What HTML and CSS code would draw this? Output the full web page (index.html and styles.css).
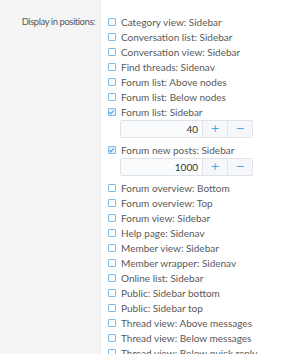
FILE: index.html
```html
<!DOCTYPE html>
<html>
	<head>
		<meta charset="UTF-8">
		<title>Display in positions</title>
		<link rel="stylesheet" href="styles.css">
	</head>
	<body>
		<div class="formrow">
			<div class="label">Display in positions:</div>
			<div class="field">
				<ul class="choices">
					<li><span class="box"></span>Category view: Sidebar</li>
					<li><span class="box"></span>Conversation list: Sidebar</li>
					<li><span class="box"></span>Conversation view: Sidebar</li>
					<li><span class="box"></span>Find threads: Sidenav</li>
					<li><span class="box"></span>Forum list: Above nodes</li>
					<li><span class="box"></span>Forum list: Below nodes</li>
					<li><span class="box checked"></span>Forum list: Sidebar</li>
					<li class="sub">
						<div class="spinner">
							<span class="num">40</span>
							<span class="btn">+</span>
							<span class="btn">&minus;</span>
						</div>
					</li>
					<li><span class="box checked"></span>Forum new posts: Sidebar</li>
					<li class="sub">
						<div class="spinner">
							<span class="num">1000</span>
							<span class="btn">+</span>
							<span class="btn">&minus;</span>
						</div>
					</li>
					<li><span class="box"></span>Forum overview: Bottom</li>
					<li><span class="box"></span>Forum overview: Top</li>
					<li><span class="box"></span>Forum view: Sidebar</li>
					<li><span class="box"></span>Help page: Sidenav</li>
					<li><span class="box"></span>Member view: Sidebar</li>
					<li><span class="box"></span>Member wrapper: Sidenav</li>
					<li><span class="box"></span>Online list: Sidebar</li>
					<li><span class="box"></span>Public: Sidebar bottom</li>
					<li><span class="box"></span>Public: Sidebar top</li>
					<li><span class="box"></span>Thread view: Above messages</li>
					<li><span class="box"></span>Thread view: Below messages</li>
					<li><span class="box"></span>Thread view: Below quick reply</li>
				</ul>
			</div>
		</div>
	</body>
</html>
```
FILE: styles.css
```css
*{
	margin: 0;
	padding: 0;
	box-sizing: border-box;
}
body{
	font-family: Lato, "Open Sans", sans-serif;
	font-size: 10px;
	color: #595959;
	background: #fff;
	overflow: hidden;
}
.formrow{
	display: flex;
	min-height: 354px;
}
.label{
	width: 101px;
	flex-shrink: 0;
	background: #f5f5f5;
	border-right: 1px solid #ececec;
	text-align: right;
	padding: 14px 5px 0 0;
	line-height: 15px;
	font-size: 9.5px;
	letter-spacing: -0.45px;
}
.field{
	flex: 1;
	padding: 14px 0 0 7px;
}
.choices{
	list-style: none;
}
.choices li{
	display: flex;
	align-items: center;
	height: 15px;
	white-space: nowrap;
}
.choices li.sub{
	height: auto;
	padding: 1px 0 4px 12px;
}
.box{
	width: 8px;
	height: 8px;
	border: 1px solid #7dbbe6;
	border-radius: 1px;
	margin-right: 5px;
	position: relative;
	background: #fff;
}
.box.checked{
	background: #e6f1fa;
}
.box.checked:after{
	content: "";
	position: absolute;
	left: 1px;
	top: 0;
	width: 2px;
	height: 4px;
	border: solid #47a7eb;
	border-width: 0 1px 1px 0;
	transform: rotate(40deg);
}
.spinner{
	display: flex;
	width: 133px;
	height: 18px;
	border: 1px solid #e0e4e8;
	border-radius: 2px;
	overflow: hidden;
}
.num{
	flex: 1;
	text-align: right;
	line-height: 16px;
	padding-right: 4px;
	background: #f9fbfd;
	color: #333;
}
.btn{
	width: 25px;
	text-align: center;
	line-height: 16px;
	font-family: "DejaVu Sans", sans-serif;
	font-size: 11px;
	color: #47a7eb;
	background: #f5f7fa;
	border-left: 1px solid #e0e4e8;
}
```
